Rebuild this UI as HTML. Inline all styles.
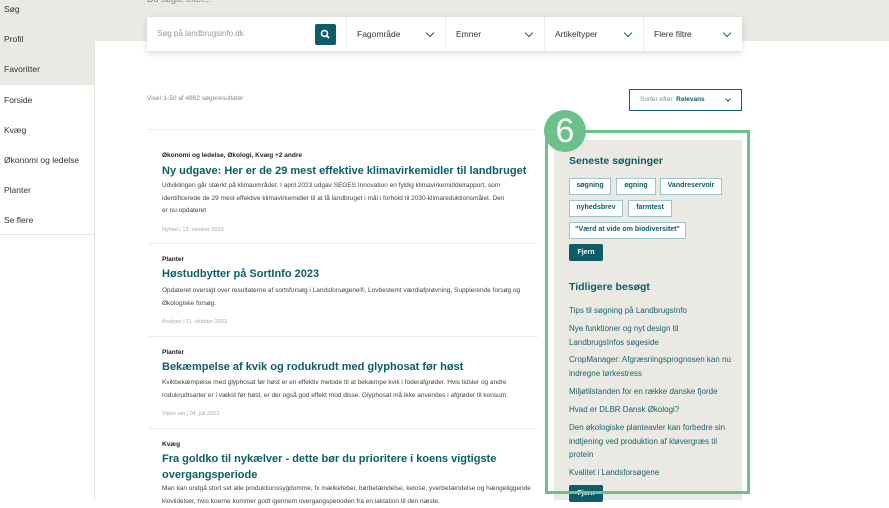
<!DOCTYPE html>
<html><head><meta charset="utf-8"><style>
*{margin:0;padding:0;box-sizing:border-box}
body{width:889px;height:500px;overflow:hidden;background:#fff;font-family:"Liberation Sans",sans-serif;color:#333;position:relative}
.abs{position:absolute}
.side{left:0;top:0;width:95px;height:500px;border-right:1px solid #e6e4de}
.side .top{position:absolute;left:0;top:0;width:94px;height:84px;background:#ebe9e3}
.side div.i{position:absolute;left:4px;font-size:8.5px;color:#333}
.banner{left:95px;top:0;width:794px;height:41px;background:#ebe9e3}
.sbar{left:147px;top:17px;width:595px;height:34px;background:#fff;box-shadow:0 2px 6px rgba(0,0,0,.15);font-size:8.5px}
.sbar .f{position:absolute;top:0;height:34px;line-height:34px;border-left:1px solid #eee}
.chev{position:absolute;top:13px;width:6px;height:6px;border-right:1.3px solid #1b5e6b;border-bottom:1.3px solid #1b5e6b;transform:rotate(45deg)}
.teal{color:#0e5c68}
.res{left:147px;width:391px;border-top:1px solid #eee}
.cat{font-size:6.5px;font-weight:bold;color:#222}
.ttl{font-size:11px;font-weight:bold;color:#0e5c68;line-height:16px}
.txt{font-size:6.5px;color:#444;line-height:12.5px}
.meta{font-size:5.5px;color:#aaa}
.box{left:554px;top:140px;width:188px;height:360px;background:#ebe9e3}
.tag{position:absolute;height:17px;border:1.5px solid #9cc4c9;background:#fff;font-size:7px;font-weight:bold;color:#0e5c68;line-height:14px;text-align:center}
.btn{position:absolute;background:#0e5c68;color:#fff;font-size:7px;font-weight:bold;text-align:center;border-radius:2px}
.lnk{position:absolute;left:569px;font-size:8px;color:#1b6370;line-height:13.5px;width:165px}
</style></head><body>
<div class="abs side"><div class="top"></div>
<div class="i" style="top:4px">Søg</div>
<div class="i" style="top:34px">Profil</div>
<div class="i" style="top:64px">Favoritter</div>
<div class="abs" style="left:0;top:84px;width:94px;border-top:1px solid #e6e4de"></div>
<div class="i" style="top:95px">Forside</div>
<div class="i" style="top:125px">Kvæg</div>
<div class="i" style="top:155px">Økonomi og ledelse</div>
<div class="i" style="top:185px">Planter</div>
<div class="i" style="top:215px">Se flere</div>
<div class="abs" style="left:0;top:234px;width:94px;border-top:1px solid #e6e4de"></div>
</div>
<div class="abs banner"><div class="abs" style="left:52px;top:-6px;font-size:9px;color:#888">Du søgte efter...</div></div>
<div class="abs sbar">
<div class="abs" style="left:10px;top:0;line-height:34px;color:#999;font-size:8px">Søg på landbrugsinfo.dk</div>
<div class="abs" style="left:168px;top:7px;width:21px;height:21px;background:#0e5c68;border-radius:2px">
<svg width="21" height="21" viewBox="0 0 21 21"><circle cx="9.5" cy="9.5" r="3" fill="none" stroke="#fff" stroke-width="1.6"/><path d="M11.7 11.7L14 14" stroke="#fff" stroke-width="1.8"/></svg></div>
<div class="f" style="left:199px;width:99px;padding-left:10px">Fagområde<span class="chev" style="left:80px"></span></div>
<div class="f" style="left:298px;width:99px;padding-left:10px">Emner<span class="chev" style="left:80px"></span></div>
<div class="f" style="left:397px;width:99px;padding-left:10px">Artikeltyper<span class="chev" style="left:80px"></span></div>
<div class="f" style="left:496px;width:99px;padding-left:10px">Flere filtre<span class="chev" style="left:80px"></span></div>
</div>
<div class="abs" style="left:147px;top:95px;font-size:6.5px;color:#888">Viser 1-50 af 4862 søgeresultater</div>
<div class="abs" style="left:629px;top:89px;width:113px;height:22px;border:1.5px solid #1b5e6b;font-size:6.5px;line-height:19px;padding-left:10px;color:#888">Sorter efter: <b class="teal">Relevans</b><span class="abs" style="left:96px;top:7px;width:4px;height:4px;border-right:1px solid #1b5e6b;border-bottom:1px solid #1b5e6b;transform:rotate(45deg)"></span></div>

<div class="abs res" style="top:129px;height:115px">
<div class="abs cat" style="left:15px;top:22px">Økonomi og ledelse, Økologi, Kvæg +2 andre</div>
<div class="abs ttl" style="left:15px;top:33px">Ny udgave: Her er de 29 mest effektive klimavirkemidler til landbruget</div>
<div class="abs txt" style="left:15px;top:50px;width:345px">Udviklingen går stærkt på klimaområdet. I april 2023 udgav SEGES Innovation en fyldig klimavirkemiddelrapport, som identificerede de 29 mest effektive klimavirkemidler til at få landbruget i mål i forhold til 2030-klimareduktionsmålet. Den er nu opdateret</div>
<div class="abs meta" style="left:15px;top:97px">Nyhed | 13. oktober 2023</div>
</div>
<div class="abs res" style="top:243px;height:93px">
<div class="abs cat" style="left:15px;top:12px">Planter</div>
<div class="abs ttl" style="left:15px;top:22px">Høstudbytter på SortInfo 2023</div>
<div class="abs txt" style="left:15px;top:41px;width:380px">Opdateret oversigt over resultaterne af sortsforsøg i Landsforsøgene®, Lovbestemt værdiafprøvning, Supplerende forsøg og Økologiske forsøg.</div>
<div class="abs meta" style="left:15px;top:75px">Analyse | 11. oktober 2023</div>
</div>
<div class="abs res" style="top:336px;height:92px">
<div class="abs cat" style="left:15px;top:12px">Planter</div>
<div class="abs ttl" style="left:15px;top:22px">Bekæmpelse af kvik og rodukrudt med glyphosat før høst</div>
<div class="abs txt" style="left:15px;top:40px;width:380px">Kvikbekæmpelse med glyphosat før høst er en effektiv metode til at bekæmpe kvik i foderafgrøder. Hvis tidsler og andre rodukrudtsarter er i vækst før høst, er der også god effekt mod disse. Glyphosat må ikke anvendes i afgrøder til konsum.</div>
<div class="abs meta" style="left:15px;top:74px">Viden om | 04. juli 2023</div>
</div>
<div class="abs res" style="top:428px;height:80px">
<div class="abs cat" style="left:15px;top:12px">Kvæg</div>
<div class="abs ttl" style="left:15px;top:22px;width:340px">Fra goldko til nykælver - dette bør du prioritere i koens vigtigste overgangsperiode</div>
<div class="abs txt" style="left:15px;top:54px;width:380px">Man kan undgå stort set alle produktionssygdomme, fx mælkefeber, børbetændelse, ketose, yverbetændelse og hængeliggende klovlidelser, hvis koerne kommer godt igennem overgangsperioden fra en laktation til den næste.</div>
</div>

<div class="abs box"></div>
<div class="abs" style="left:569px;top:155px;font-size:10.5px;font-weight:bold;color:#0e5c68">Seneste søgninger</div>
<div class="tag" style="left:569px;top:178px;width:42px">søgning</div>
<div class="tag" style="left:616px;top:178px;width:40px">øgning</div>
<div class="tag" style="left:660px;top:178px;width:62px">Vandreservoir</div>
<div class="tag" style="left:569px;top:200px;width:54px">nyhedsbrev</div>
<div class="tag" style="left:628px;top:200px;width:44px">farmtest</div>
<div class="tag" style="left:569px;top:222px;width:117px">"Værd at vide om biodiversitet"</div>
<div class="btn" style="left:569px;top:244px;width:34px;height:17px;line-height:17px">Fjern</div>
<div class="abs" style="left:569px;top:281px;font-size:10.5px;font-weight:bold;color:#0e5c68">Tidligere besøgt</div>
<div class="lnk" style="top:304px">Tips til søgning på LandbrugsInfo</div>
<div class="lnk" style="top:322px">Nye funktioner og nyt design til LandbrugsInfos søgeside</div>
<div class="lnk" style="top:353px">CropManager: Afgræsningsprognosen kan nu indregne tørkestress</div>
<div class="lnk" style="top:385px">Miljøtilstanden for en række danske fjorde</div>
<div class="lnk" style="top:403px">Hvad er DLBR Dansk Økologi?</div>
<div class="lnk" style="top:421px">Den økologiske planteavler kan forbedre sin indtjening ved produktion af kløvergræs til protein</div>
<div class="lnk" style="top:466px">Kvalitet i Landsforsøgene</div>
<div class="btn" style="left:569px;top:485px;width:34px;height:17px;line-height:17px">Fjern</div>
<div class="abs" style="left:545px;top:130px;width:205px;height:364px;border:3px solid #6cc08a"></div>
<div class="abs" style="left:544px;top:110px;width:42px;height:42px;border-radius:50%;background:#6cc08a;color:#fff;font-size:34px;text-align:center;line-height:42px">6</div>
</body></html>
